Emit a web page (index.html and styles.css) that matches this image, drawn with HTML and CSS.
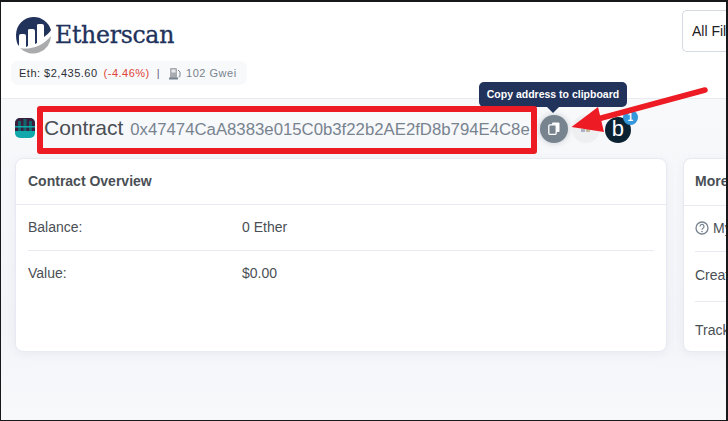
FILE: index.html
```html
<!DOCTYPE html>
<html lang="en">
<head>
<meta charset="utf-8">
<title>Contract</title>
<link rel="stylesheet" href="styles.css">
</head>
<body>
<div class="frame">
  <header class="header">
    <div class="brand-col">
      <div class="logo">
        <svg class="logo-mark" width="37" height="38" viewBox="0 0 37 38">
          <path d="M36 20A18 18 0 0 1 5 32C14 34 27 31 36 20Z" fill="#a9abad"/>
          <path d="M18 1A18 18 0 0 0 1 19C1 24 2 28 4 30L4 20Q4 18 6 18L9 18Q11 18 11 20L11 31L13 30L13 14Q13 13 15 13L18 13Q20 13 20 15L20 28L22 27L22 9Q22 8 24 8L27 8Q29 8 29 10L29 21C32 19 35 16 36 14A18 18 0 0 0 18 1Z" fill="#21325b"/>
        </svg>
        <span class="logo-text">Etherscan</span>
      </div>
      <div class="stats">
        <span class="eth">Eth: $2,435.60</span>
        <span class="neg">(-4.46%)</span>
        <span class="sep">|</span>
        <svg class="pump" width="13" height="13" viewBox="0 0 13 13"><rect x="1" y="1" width="7" height="11" rx="1" fill="#a9abb0"/><rect x="2.5" y="2.5" width="4" height="3" fill="#e8eaee"/><rect x="0" y="10.5" width="9" height="2" fill="#77838f"/><path d="M9 3l2 2v4q0 1-1.500 1" fill="none" stroke="#77838f"/></svg>
        <span class="gwei">102 Gwei</span>
      </div>
    </div>
    <div class="filter">All Filters</div>
  </header>
  <main class="main">
    <div class="title-row">
      <svg class="token" width="20" height="20" viewBox="0 0 20 20">
        <rect width="20" height="20" rx="5" fill="#12a9ad"/>
        <path d="M0 5a5 5 0 0 1 5-5h10a5 5 0 0 1 5 5v8H0Z" fill="#3a1f3d"/>
        <path d="M3 3h3v10H3ZM8.500 1h3v12h-3ZM14 3h3v10h-3Z" fill="#12666e"/>
        <rect y="8" width="20" height="1.500" fill="#12a9ad"/>
      </svg>
      <h1 class="title">Contract <span class="address">0x47474CaA8383e015C0b3f22b2AE2fD8b794E4C8e</span></h1>
      <div class="actions">
        <span class="round copy">
          <svg width="12" height="13" viewBox="0 0 12 13"><rect x="4" y="0.500" width="7.500" height="9.500" rx="1" fill="#fff"/><rect x="0.800" y="2.800" width="7.400" height="9.500" rx="1" fill="#77838f" stroke="#fff" stroke-width="1.300"/></svg>
        </span>
        <span class="round qr">
          <svg width="10" height="7" viewBox="0 0 10 7"><rect width="4" height="3" fill="#c9b9a0"/><rect x="5" width="4" height="3" fill="#aab2c4"/><rect y="4" width="4" height="3" fill="#aab2c4"/><rect x="5" y="4" width="4" height="3" fill="#c9b9a0"/></svg>
        </span>
        <span class="round blockie">b<span class="badge">1</span></span>
      </div>
    </div>
    <div class="cards">
      <section class="card overview">
        <h2 class="card-head">Contract Overview</h2>
        <div class="card-body">
          <div class="row"><span class="label">Balance:</span><span>0 Ether</span></div>
          <div class="row"><span class="label">Value:</span><span>$0.00</span></div>
        </div>
      </section>
      <section class="card more">
        <h2 class="card-head tall-head">More Info</h2>
        <div class="card-body">
          <div class="row">
            <span class="label">
              <svg class="help" width="14" height="14" viewBox="0 0 14 14"><circle cx="7" cy="7" r="6" fill="none" stroke="#77838f" stroke-width="1.300"/><path d="M5 5.500a2 2 0 1 1 3 1.700c-.7.4-1 .8-1 1.500" fill="none" stroke="#77838f" stroke-width="1.200"/><circle cx="7" cy="10.500" r=".8" fill="#77838f"/></svg>
              My Name Tag:
            </span>
          </div>
          <div class="row creator"><span class="label">Creator:</span></div>
          <div class="row tracker"><span class="label">Tracker:</span></div>
        </div>
      </section>
    </div>
  </main>
  <div class="tooltip">Copy address to clipboard</div>
  <div class="highlight"></div>
  <svg class="arrow" width="170" height="60" viewBox="0 0 170 60">
    <path d="M136 3L25 33" stroke="#ed1c24" stroke-width="5.500" stroke-linecap="round" fill="none"/>
    <path d="M2.500 40L29 20L35 45Z" fill="#ed1c24"/>
  </svg>
</div>
</body>
</html>
```
FILE: styles.css
```css
* { box-sizing: border-box; }
html, body { margin: 0; height: 100%; }
body { font-family: "Liberation Sans", Arial, sans-serif; color: #4a4f55; }
.frame {
  position: relative;
  width: 728px;
  height: 421px;
  overflow: hidden;
  border-style: solid;
  border-color: #16181a;
  border-width: 2px 2px 1px 1px;
  display: flex;
  flex-direction: column;
  background: #f8f9fb;
}
.header {
  height: 97px;
  flex: none;
  background: #fff;
  border-bottom: 1px solid #e9ebf1;
  display: flex;
  justify-content: space-between;
  padding: 8px 0 0 10px;
}
.brand-col { display: flex; flex-direction: column; align-items: flex-start; }
.logo { display: flex; align-items: center; padding-left: 4px; height: 43px; margin-top: 3px; }
.logo-mark { flex: none; }
.logo-text {
  font-family: "DejaVu Serif", serif;
  font-size: 23.600px;
  color: #21325b;
  margin-left: 3px;
  letter-spacing: -0.3px;
  -webkit-text-stroke: 0.3px #21325b;
}
.stats {
  margin-top: 5px;
  height: 24px;
  width: 236px;
  padding: 0 8px;
  border-radius: 7px;
  background: #f8f9fa;
  display: flex;
  align-items: center;
  font-size: 11px;
  letter-spacing: 0.5px;
  white-space: nowrap;
}
.eth { color: #2b2f36; }
.neg { color: #de4437; margin-left: 6px; }
.sep { color: #6c5b7b; margin: 0 9px 0 7px; }
.pump { margin-right: 3px; }
.gwei { color: #77838f; margin-left: 1px; }
.filter {
  width: 60px;
  height: 42px;
  margin-right: -16px;
  border: 1px solid #d5dae2;
  border-right: 0;
  border-radius: 5px 0 0 5px;
  padding-left: 9px;
  line-height: 40px;
  font-size: 14px;
  color: #1e2022;
  white-space: nowrap;
  overflow: hidden;
}
.main {
  flex: 1;
  background: linear-gradient(#f8f9fb, #f3f4f8 70%, #f8f9fb);
  padding: 0 0 0 14px;
  min-height: 0;
}
.title-row { display: flex; align-items: center; height: 59px; }
.token { flex: none; margin-top: -2px; }
.title {
  margin: 0 0 2px 9px;
  font-size: 21px;
  font-weight: 400;
  color: #4a4f55;
  white-space: nowrap;
}
.address { font-size: 16.750px; color: #77838f; margin-left: 1px; }
.actions { display: flex; margin-left: 10px; gap: 4px; }
.round {
  position: relative;
  width: 28px;
  height: 28px;
  border-radius: 50%;
  display: flex;
  align-items: center;
  justify-content: center;
  flex: none;
}
.copy { background: #77838f; box-shadow: 0 0 6px rgba(119, 131, 143, 0.4); }
.qr { background: #eeeff1; }
.blockie {
  width: 26px;
  height: 26px;
  margin-left: 1px;
  margin-top: 2px;
  background: #0b2233;
  color: #fff;
  font-size: 22px;
  line-height: 1;
  padding-bottom: 2px;
}
.badge {
  position: absolute;
  top: -7px;
  right: -7px;
  width: 15px;
  height: 15px;
  border-radius: 50%;
  background: #3498db;
  color: #fff;
  font-size: 10px;
  font-weight: 700;
  line-height: 15px;
  text-align: center;
}
.cards { display: flex; gap: 16px; }
.card {
  flex: none;
  height: 194px;
  background: #fff;
  border: 1px solid #e8eaf3;
  border-radius: 8px;
  box-shadow: 0 2px 8px rgba(189, 197, 209, 0.2);
  font-size: 14px;
}
.overview { width: 652px; }
.more { width: 400px; }
.card-head {
  margin: 0;
  height: 46px;
  padding: 0 12px;
  border-bottom: 1px solid #e7eaf3;
  font-size: 14px;
  font-weight: 700;
  line-height: 44px;
  color: #4a4f55;
}
.tall-head { height: 47px; padding-left: 11px; }
.card-body { padding: 0 12px; }
.more .card-body { padding-left: 11px; }
.row {
  height: 46px;
  padding-bottom: 2px;
  display: flex;
  align-items: center;
  border-bottom: 1px solid #e7eaf3;
  color: #4a4f55;
}
.row:last-child { border-bottom: 0; }
.row.creator { height: 50px; padding-bottom: 4px; }
.row.tracker { height: 50px; padding-bottom: 0; padding-top: 5px; }
.label { width: 214px; flex: none; display: flex; align-items: center; gap: 4px; white-space: nowrap; }
.help { flex: none; }
.tooltip {
  position: absolute;
  left: 478px;
  top: 80px;
  width: 148px;
  height: 25px;
  border-radius: 5px;
  background: #21325b;
  color: #fff;
  font-size: 10.500px;
  font-weight: 700;
  line-height: 24px;
  text-align: center;
  white-space: nowrap;
}
.tooltip::after {
  content: "";
  position: absolute;
  left: 68px;
  top: 25px;
  border: 6px solid transparent;
  border-top-color: #21325b;
  border-bottom: 0;
}
.highlight {
  position: absolute;
  left: 36px;
  top: 104px;
  width: 500px;
  height: 48px;
  border: 6px solid #ed1c24;
  border-radius: 3px;
}
.arrow { position: absolute; left: 568px; top: 85px; }
```
